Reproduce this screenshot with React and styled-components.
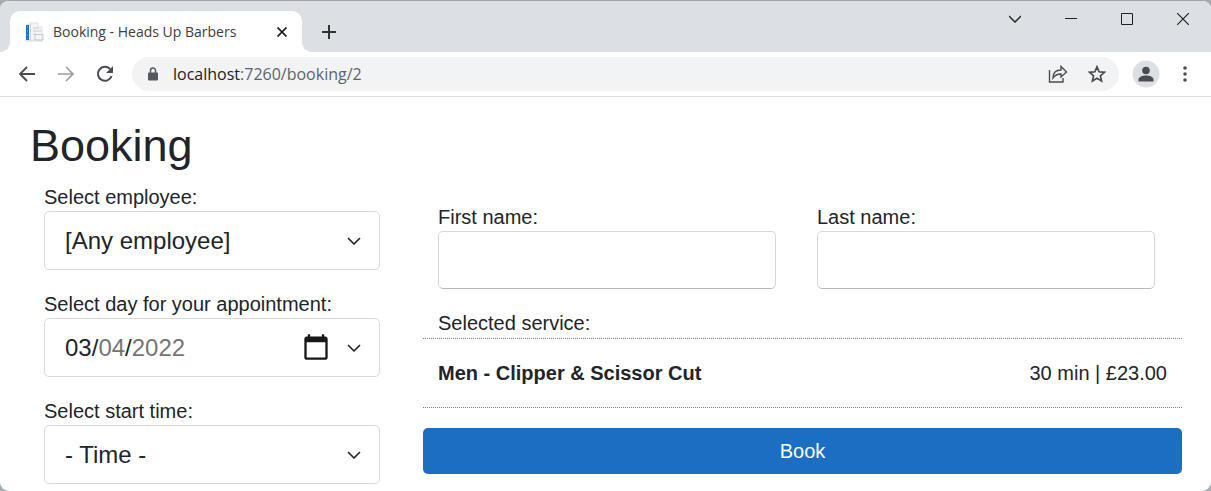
import React from "react";
import styled, { createGlobalStyle, css } from "styled-components";

const Global = createGlobalStyle`
  *, *::before, *::after { box-sizing: border-box; }
  html, body { margin: 0; }
  body {
    min-height: 100vh;
    background: #a6abb3;
    color: #212529;
    font-family: "Liberation Sans", Arial, sans-serif;
    font-size: 20px;
    overflow-x: hidden;
  }
  button, input, select { font: inherit; color: inherit; }
`;

const Window = styled.div`
  min-height: 100vh;
  border-top: 1px solid #a0a4ab;
  border-radius: 9px;
  background: #ffffff;
  overflow: hidden;
`;

const TitleBar = styled.header`
  display: flex;
  align-items: flex-end;
  height: 51px;
  padding-left: 10px;
  background: #dcdfe4;
`;

const Tab = styled.div`
  display: flex;
  align-items: center;
  position: relative;
  width: 292px;
  height: 41px;
  padding: 0 12px 0 14px;
  border-radius: 10px 10px 0 0;
  background: #ffffff;
  font-family: "Open Sans", "Noto Sans", sans-serif;
  font-size: 14px;
  color: #3c4043;

  &::before, &::after {
    content: "";
    position: absolute;
    bottom: 0;
    width: 10px;
    height: 10px;
  }
  &::before {
    right: 100%;
    background: radial-gradient(circle at 0 0, transparent 10px, #ffffff 10px);
  }
  &::after {
    left: 100%;
    background: radial-gradient(circle at 100% 0, transparent 10px, #ffffff 10px);
  }
`;

const TabTitle = styled.span`
  flex: 1;
  margin-left: 9px;
  white-space: nowrap;
`;

const IconButton = styled.button`
  display: grid;
  place-items: center;
  flex: none;
  width: ${(p) => p.$width || 39}px;
  height: ${(p) => p.$height || 36}px;
  padding: 0;
  border: 0;
  background: none;
  color: ${(p) => p.$color || "#4a4d51"};
  svg { display: block; }
`;

const WindowControls = styled.div`
  display: flex;
  align-self: flex-start;
  margin-left: auto;
`;

const Toolbar = styled.nav`
  display: flex;
  align-items: center;
  height: 45px;
  padding: 0 7px;
  border-bottom: 1px solid #dcdfe4;
`;

const AddressBar = styled.div`
  display: flex;
  align-items: center;
  flex: 1;
  height: 34px;
  margin: 0 7px 0 8px;
  padding: 0 3px 0 13px;
  border-radius: 17px;
  background: #f1f3f4;
`;

const Address = styled.span`
  flex: 1;
  margin-left: 12px;
  font-family: "Open Sans", "Noto Sans", sans-serif;
  font-size: 16px;
  color: #5f6368;
  b { font-weight: 400; color: #202124; }
`;

const Page = styled.main`
  padding: 22px 29px 7px 30px;
`;

const Title = styled.h1`
  margin: 0;
  font-size: 45px;
  font-weight: 400;
  line-height: 54px;
`;

const Form = styled.form`
  display: grid;
  grid-template-columns: 336px 1fr;
  gap: 43px;
  padding: 10px 0 0 14px;
`;

const Schedule = styled.div`
  display: grid;
  gap: 20px;
  align-content: start;
`;

const Details = styled.div`
  padding-top: 20px;
`;

const Names = styled.div`
  display: grid;
  grid-template-columns: 1fr 1fr;
  gap: 41px;
  padding: 0 27px 0 15px;
`;

const Label = styled.label`
  display: block;
  line-height: 28px;
`;

const controlStyle = css`
  display: block;
  width: 100%;
  height: 59px;
  margin: 0;
  padding: 0 20px;
  border: 1px solid #d5d9de;
  border-radius: 5px;
  background: #ffffff;
  font-size: 24px;
  appearance: none;
`;

const Control = styled.div`
  position: relative;
  > svg {
    position: absolute;
    top: 22px;
    right: 18px;
    pointer-events: none;
  }
`;

const Select = styled.select`
  ${controlStyle}
`;

const DateInput = styled.input`
  ${controlStyle}
  padding-right: 48px;
  &::-webkit-datetime-edit-month-field,
  &::-webkit-datetime-edit-day-field,
  &::-webkit-datetime-edit-year-field { padding: 0; }
  &::-webkit-datetime-edit-day-field,
  &::-webkit-datetime-edit-year-field { color: #757575; }
  &::-webkit-calendar-picker-indicator {
    width: 30px;
    height: 30px;
    padding: 0;
    background-size: contain;
    opacity: 0.9;
  }
`;

const TextInput = styled.input`
  ${controlStyle}
  height: 58px;
  border-bottom-color: #b4b9c0;
`;

const ServiceHeading = styled.h2`
  margin: 20px 0 0;
  padding-left: 15px;
  font-size: 20px;
  font-weight: 400;
  line-height: 29px;
`;

const Service = styled.div`
  display: flex;
  align-items: center;
  justify-content: space-between;
  height: 70px;
  padding: 0 15px;
  border: 1px dotted #80858d;
  border-width: 1px 0;
`;

const BookButton = styled.button`
  display: block;
  width: 100%;
  height: 46px;
  margin-top: 20px;
  padding: 0;
  border: 0;
  border-radius: 5px;
  background: #1b6ec2;
  color: #ffffff;
`;

const Icon = ({ size = 20, width, children, view }) => (
  <svg width={width || size} height={size} viewBox={view || `0 0 ${size} ${size}`} fill="none" stroke="currentColor" aria-hidden="true">
    {children}
  </svg>
);

const Chevron = () => (
  <Icon size={16} view="0 0 16 16">
    <path d="M2.500 5.500L8 11l5.500-5.500" strokeWidth="1.700" strokeLinecap="round" strokeLinejoin="round" />
  </Icon>
);

const Favicon = () => (
  <Icon size={20}>
    <path d="M6 1h8v4h4v13H3V3h3z" fill="#f3f5f7" stroke="#dde1e6" />
    <path d="M3.500 3v15" stroke="#1b6ec2" strokeWidth="3" />
    <path d="M3.500 4v13" stroke="#5f9bdb" strokeDasharray="2 2" />
    <path d="M6.500 2v16" stroke="#cfd6df" />
    <path d="M9 6h6M9 9h8M9 12h3M11 12.500h8v5.500h-8z" stroke="#c5cad1" />
    <path d="M1 19h18" stroke="#d3d8de" />
  </Icon>
);

function SelectField({ id, label, option }) {
  return (
    <div>
      <Label htmlFor={id}>{label}</Label>
      <Control>
        <Select id={id}><option>{option}</option></Select>
        <Chevron />
      </Control>
    </div>
  );
}

function TextField({ id, label }) {
  return (
    <div>
      <Label htmlFor={id}>{label}</Label>
      <TextInput id={id} type="text" />
    </div>
  );
}

export default function App() {
  return (
    <>
      <Global />
      <Window>
        <TitleBar>
          <Tab>
            <Favicon />
            <TabTitle>Booking - Heads Up Barbers</TabTitle>
            <IconButton $width={16} $height={16} $color="#202124" aria-label="Close tab">
              <Icon size={10}><path d="M.5.5l9 9M9.500.5l-9 9" strokeWidth="1.700" /></Icon>
            </IconButton>
          </Tab>
          <IconButton $width={54} $height={41} $color="#303236" aria-label="New tab">
            <Icon size={14}><path d="M7 0v14M0 7h14" strokeWidth="2" /></Icon>
          </IconButton>
          <WindowControls>
            <IconButton $width={56} $color="#202124" aria-label="Search tabs">
              <Icon size={12}><path d="M0 3l6 6 6-6" strokeWidth="1.300" /></Icon>
            </IconButton>
            <IconButton $width={56} $color="#202124" aria-label="Minimize">
              <Icon size={12}><path d="M0 5.500h12" /></Icon>
            </IconButton>
            <IconButton $width={56} $color="#202124" aria-label="Maximize">
              <Icon size={12}><path d="M.5.5h11v11H.5z" /></Icon>
            </IconButton>
            <IconButton $width={56} $color="#202124" aria-label="Close">
              <Icon size={12}><path d="M0 0l12 12M12 0L0 12" strokeWidth="1.200" /></Icon>
            </IconButton>
          </WindowControls>
        </TitleBar>
        <Toolbar>
          <IconButton aria-label="Back">
            <Icon size={16}><path d="M16 8H1M8 1L1 8l7 7" strokeWidth="1.800" /></Icon>
          </IconButton>
          <IconButton $color="#9a9da3" aria-label="Forward">
            <Icon size={16}><path d="M0 8h15M8 1l7 7-7 7" strokeWidth="1.600" /></Icon>
          </IconButton>
          <IconButton aria-label="Reload">
            <Icon size={18}>
              <path d="M15.500 11.200A7 7 0 1 1 14 4" strokeWidth="2" />
              <path d="M17 1v7h-7z" fill="currentColor" stroke="none" />
            </Icon>
          </IconButton>
          <AddressBar>
            <Icon size={16}>
              <path d="M3.500 7h9v7h-9z" fill="#55585c" stroke="#55585c" strokeLinejoin="round" />
              <path d="M5.500 7V4.500a2.500 2.500 0 0 1 5 0V7" stroke="#55585c" strokeWidth="1.500" />
            </Icon>
            <Address><b>localhost</b>:7260/booking/2</Address>
            <IconButton aria-label="Share">
              <Icon size={20}>
                <path d="M1.500 6v12H15v-4" strokeWidth="1.400" />
                <path d="M5 14c0-5 3-8 8-8V2.500l5.500 5.500-5.500 5V10c-4 0-6 1-8 4z" strokeWidth="1.400" />
              </Icon>
            </IconButton>
            <IconButton aria-label="Bookmark">
              <Icon size={18}>
                <path d="M9 1.800l2.100 5 5.300.5-4 3.500 1.200 5.300L9 13.300l-4.600 2.800 1.200-5.300-4-3.500 5.300-.5z" strokeWidth="1.700" />
              </Icon>
            </IconButton>
          </AddressBar>
          <IconButton aria-label="Profile">
            <Icon size={28}>
              <circle cx="14" cy="14" r="13.500" fill="#dcdfe4" stroke="none" />
              <circle cx="14" cy="10.500" r="3.800" fill="currentColor" stroke="none" />
              <path d="M6.500 21.500v-2c0-2.500 4-4 7.500-4s7.500 1.500 7.500 4v2z" fill="currentColor" stroke="none" />
            </Icon>
          </IconButton>
          <IconButton aria-label="Menu">
            <Icon size={18}>
              <g fill="currentColor" stroke="none">
                <circle cx="9" cy="3" r="1.800" /><circle cx="9" cy="9" r="1.800" /><circle cx="9" cy="15" r="1.800" />
              </g>
            </Icon>
          </IconButton>
        </Toolbar>
        <Page>
          <Title>Booking</Title>
          <Form>
            <Schedule>
              <SelectField id="employee" label="Select employee:" option="[Any employee]" />
              <div>
                <Label htmlFor="day">Select day for your appointment:</Label>
                <Control>
                  <DateInput id="day" type="date" defaultValue="2022-03-04" />
                  <Chevron />
                </Control>
              </div>
              <SelectField id="time" label="Select start time:" option="- Time -" />
            </Schedule>
            <Details>
              <Names>
                <TextField id="first-name" label="First name:" />
                <TextField id="last-name" label="Last name:" />
              </Names>
              <ServiceHeading>Selected service:</ServiceHeading>
              <Service>
                <strong>Men - Clipper &amp; Scissor Cut</strong>
                <span>30 min | £23.00</span>
              </Service>
              <BookButton type="button">Book</BookButton>
            </Details>
          </Form>
        </Page>
      </Window>
    </>
  );
}
